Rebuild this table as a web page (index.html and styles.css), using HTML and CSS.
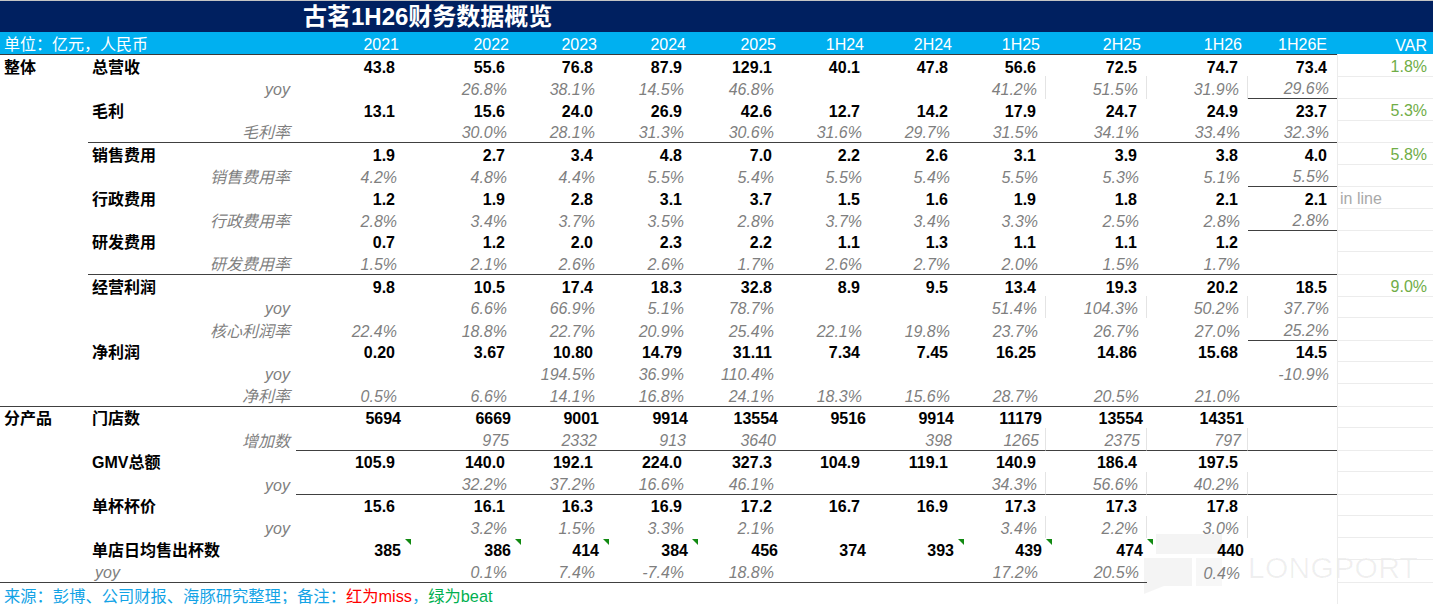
FILE: index.html
```html
<!DOCTYPE html>
<html lang="zh-CN">
<head>
<meta charset="utf-8">
<title>古茗1H26财务数据概览</title>
<link rel="stylesheet" href="styles.css">
</head>
<body>
<div class="sheet">
  <div class="title">古茗1H26财务数据概览</div>

  <div class="r hd">
    <div>单位：亿元，人民币</div><div></div>
    <div>2021</div><div>2022</div><div>2023</div><div>2024</div><div>2025</div><div>1H24</div><div>2H24</div><div>1H25</div><div>2H25</div><div>1H26</div><div>1H26E</div><div>VAR</div>
  </div>

  <div class="r nr">
    <div>整体</div><div>总营收</div>
    <div>43.8</div><div>55.6</div><div>76.8</div><div>87.9</div><div>129.1</div><div>40.1</div><div>47.8</div><div>56.6</div><div>72.5</div><div>74.7</div><div>73.4</div><div>1.8%</div>
  </div>
  <div class="r pr be gl">
    <div></div><div>yoy</div>
    <div></div><div>26.8%</div><div>38.1%</div><div>14.5%</div><div>46.8%</div><div></div><div></div><div>41.2%</div><div>51.5%</div><div>31.9%</div><div>29.6%</div><div></div>
  </div>
  <div class="r nr">
    <div></div><div>毛利</div>
    <div>13.1</div><div>15.6</div><div>24.0</div><div>26.9</div><div>42.6</div><div>12.7</div><div>14.2</div><div>17.9</div><div>24.7</div><div>24.9</div><div>23.7</div><div>5.3%</div>
  </div>
  <div class="r pr b1">
    <div></div><div>毛利率</div>
    <div></div><div>30.0%</div><div>28.1%</div><div>31.3%</div><div>30.6%</div><div>31.6%</div><div>29.7%</div><div>31.5%</div><div>34.1%</div><div>33.4%</div><div>32.3%</div><div></div>
  </div>

  <div class="r nr">
    <div></div><div>销售费用</div>
    <div>1.9</div><div>2.7</div><div>3.4</div><div>4.8</div><div>7.0</div><div>2.2</div><div>2.6</div><div>3.1</div><div>3.9</div><div>3.8</div><div>4.0</div><div>5.8%</div>
  </div>
  <div class="r pr be">
    <div></div><div>销售费用率</div>
    <div>4.2%</div><div>4.8%</div><div>4.4%</div><div>5.5%</div><div>5.4%</div><div>5.5%</div><div>5.4%</div><div>5.5%</div><div>5.3%</div><div>5.1%</div><div>5.5%</div><div></div>
  </div>
  <div class="r nr">
    <div></div><div>行政费用</div>
    <div>1.2</div><div>1.9</div><div>2.8</div><div>3.1</div><div>3.7</div><div>1.5</div><div>1.6</div><div>1.9</div><div>1.8</div><div>2.1</div><div>2.1</div><div class="inline">in line</div>
  </div>
  <div class="r pr be">
    <div></div><div>行政费用率</div>
    <div>2.8%</div><div>3.4%</div><div>3.7%</div><div>3.5%</div><div>2.8%</div><div>3.7%</div><div>3.4%</div><div>3.3%</div><div>2.5%</div><div>2.8%</div><div>2.8%</div><div></div>
  </div>
  <div class="r nr">
    <div></div><div>研发费用</div>
    <div>0.7</div><div>1.2</div><div>2.0</div><div>2.3</div><div>2.2</div><div>1.1</div><div>1.3</div><div>1.1</div><div>1.1</div><div>1.2</div><div></div><div></div>
  </div>
  <div class="r pr b1">
    <div></div><div>研发费用率</div>
    <div>1.5%</div><div>2.1%</div><div>2.6%</div><div>2.6%</div><div>1.7%</div><div>2.6%</div><div>2.7%</div><div>2.0%</div><div>1.5%</div><div>1.7%</div><div></div><div></div>
  </div>

  <div class="r nr">
    <div></div><div>经营利润</div>
    <div>9.8</div><div>10.5</div><div>17.4</div><div>18.3</div><div>32.8</div><div>8.9</div><div>9.5</div><div>13.4</div><div>19.3</div><div>20.2</div><div>18.5</div><div>9.0%</div>
  </div>
  <div class="r pr gl">
    <div></div><div>yoy</div>
    <div></div><div>6.6%</div><div>66.9%</div><div>5.1%</div><div>78.7%</div><div></div><div></div><div>51.4%</div><div>104.3%</div><div>50.2%</div><div>37.7%</div><div></div>
  </div>
  <div class="r pr be">
    <div></div><div>核心利润率</div>
    <div>22.4%</div><div>18.8%</div><div>22.7%</div><div>20.9%</div><div>25.4%</div><div>22.1%</div><div>19.8%</div><div>23.7%</div><div>26.7%</div><div>27.0%</div><div>25.2%</div><div></div>
  </div>
  <div class="r nr">
    <div></div><div>净利润</div>
    <div>0.20</div><div>3.67</div><div>10.80</div><div>14.79</div><div>31.11</div><div>7.34</div><div>7.45</div><div>16.25</div><div>14.86</div><div>15.68</div><div>14.5</div><div></div>
  </div>
  <div class="r pr">
    <div></div><div>yoy</div>
    <div></div><div></div><div>194.5%</div><div>36.9%</div><div>110.4%</div><div></div><div></div><div></div><div></div><div></div><div>-10.9%</div><div></div>
  </div>
  <div class="r pr b0">
    <div></div><div>净利率</div>
    <div>0.5%</div><div>6.6%</div><div>14.1%</div><div>16.8%</div><div>24.1%</div><div>18.3%</div><div>15.6%</div><div>28.7%</div><div>20.5%</div><div>21.0%</div><div></div><div></div>
  </div>

  <div class="r nr ir">
    <div>分产品</div><div>门店数</div>
    <div>5694</div><div>6669</div><div>9001</div><div>9914</div><div>13554</div><div>9516</div><div>9914</div><div>11179</div><div>13554</div><div>14351</div><div></div><div></div>
  </div>
  <div class="r pr ip b2 gl">
    <div></div><div>增加数</div>
    <div></div><div>975</div><div>2332</div><div>913</div><div>3640</div><div></div><div>398</div><div>1265</div><div>2375</div><div>797</div><div></div><div></div>
  </div>
  <div class="r nr">
    <div></div><div>GMV总额</div>
    <div>105.9</div><div>140.0</div><div>192.1</div><div>224.0</div><div>327.3</div><div>104.9</div><div>119.1</div><div>140.9</div><div>186.4</div><div>197.5</div><div></div><div></div>
  </div>
  <div class="r pr b2 gl">
    <div></div><div>yoy</div>
    <div></div><div>32.2%</div><div>37.2%</div><div>16.6%</div><div>46.1%</div><div></div><div></div><div>34.3%</div><div>56.6%</div><div>40.2%</div><div></div><div></div>
  </div>
  <div class="r nr">
    <div></div><div>单杯杯价</div>
    <div>15.6</div><div>16.1</div><div>16.3</div><div>16.9</div><div>17.2</div><div>16.7</div><div>16.9</div><div>17.3</div><div>17.3</div><div>17.8</div><div></div><div></div>
  </div>
  <div class="r pr gl">
    <div></div><div>yoy</div>
    <div></div><div>3.2%</div><div>1.5%</div><div>3.3%</div><div>2.1%</div><div></div><div></div><div>3.4%</div><div>2.2%</div><div>3.0%</div><div></div><div></div>
  </div>
  <div class="r nr ir">
    <div></div><div>单店日均售出杯数</div>
    <div class="tri">385</div><div class="tri">386</div><div class="tri">414</div><div class="tri">384</div><div>456</div><div>374</div><div class="tri">393</div><div class="tri">439</div><div class="tri">474</div><div>440</div><div></div><div></div>
  </div>
  <div class="r pr yl bf">
    <div></div><div>yoy</div>
    <div></div><div>0.1%</div><div>7.4%</div><div>-7.4%</div><div>18.8%</div><div></div><div></div><div>17.2%</div><div>20.5%</div><div>0.4%</div><div></div><div></div>
  </div>

  <div class="ft">
    <div class="src">来源：彭博、公司财报、海豚研究整理；备注：<span class="miss">红为miss</span>，<span class="beat">绿为beat</span></div>
    <div></div><div></div><div class="var"></div>
  </div>

  <div class="wm" aria-hidden="true">
    <svg class="wm-logo" width="100" height="64" viewBox="0 0 100 64">
      <rect x="14" y="4" width="66" height="20" fill="#000" fill-opacity="0.045"/>
      <rect x="2" y="28" width="48" height="28" fill="#000" fill-opacity="0.045"/>
      <rect x="54" y="28" width="26" height="28" fill="#000" fill-opacity="0.03"/>
      <polygon points="2,56 22,56 2,64" fill="#000" fill-opacity="0.045"/>
    </svg>
    <span class="wm-text">LONGPORT</span>
  </div>
</div>
</body>
</html>
```

FILE: styles.css
```css
* { box-sizing: border-box; }

body {
  margin: 0;
  background: #ffffff;
  font-family: "Liberation Sans", "Noto Sans CJK SC", sans-serif;
  font-size: 16px;
  color: #000000;
}

.sheet {
  position: relative;
  width: 1433px;
  overflow: hidden;
}

.title {
  height: 32px;
  background: #002060;
  border-top: 1px solid #c4c4c4;
  color: #ffffff;
  font-size: 24px;
  font-weight: 700;
  line-height: 30px;
  padding-top: 1px;
  padding-left: 303px;
  white-space: nowrap;
}

.r,
.ft {
  display: grid;
  grid-template-columns: 88px 208px 109px 110px 88px 89px 90px 88px 88px 88px 101px 101px 89px 96px;
  height: 22px;
}

.r > div {
  display: flex;
  align-items: center;
  justify-content: flex-end;
  white-space: nowrap;
  min-width: 0;
  line-height: 18px;
  padding-top: 4px;
}

/* header row */
.hd { background: #00b0f0; color: #ffffff; }
.hd > div { padding-right: 6px; }
.hd > div:nth-child(1) { justify-content: flex-start; padding-left: 4px; }
.hd > div:nth-child(-n+13) { border-bottom: 1px solid #3a3a3a; }
.hd > div:nth-child(13) { padding-right: 10px; }

/* category column */
.r > div:nth-child(1) { justify-content: flex-start; padding-left: 4px; font-weight: 700; }
.hd > div:nth-child(1) { font-weight: 400; }

/* number rows */
.nr > div:nth-child(2) { justify-content: flex-start; padding-left: 4px; font-weight: 700; }
.nr > div:nth-child(n+3):nth-child(-n+13) { font-weight: 700; padding-right: 10px; }
.ir > div:nth-child(n+3):nth-child(-n+13) { padding-right: 4px; }

/* percent rows */
.pr > div:nth-child(2) { padding-right: 6px; font-style: italic; color: #7f7f7f; }
.pr > div:nth-child(n+3):nth-child(-n+13) { font-style: italic; color: #7f7f7f; padding-right: 8px; }
.ip > div:nth-child(n+3):nth-child(-n+13) { padding-right: 6px; }
.yl > div:nth-child(2) { justify-content: flex-start; padding-left: 7px; }

/* VAR column */
.r > div:nth-child(14) {
  font-weight: 400;
  font-style: normal;
  color: #70ad47;
  padding-right: 6px;
  border-left: 1px solid #ececec;
  border-bottom: 1px solid #ececec;
}
.hd > div:nth-child(14) { color: #ffffff; border-left: 0; border-bottom: 0; }
.r > div.inline { justify-content: flex-start; padding-left: 2px; color: #a9a9a9; }

/* rules */
.b0 > div:nth-child(-n+13) { border-bottom: 1px solid #404040; }
.b1 > div:nth-child(n+2):nth-child(-n+13) { border-bottom: 1px solid #404040; }
.b2 > div:nth-child(n+3):nth-child(-n+13) { border-bottom: 1px solid #404040; }
.be > div:nth-child(13) { border-bottom: 1px solid #404040; }
.bf > div:nth-child(-n+11) { border-bottom: 1px solid #404040; }
.gl > div:nth-child(n+10):nth-child(-n+12) { border-right: 1px solid #e4e4e4; }

/* comment indicators */
.tri { position: relative; }
.tri::after {
  content: "";
  position: absolute;
  top: 1px;
  right: -6px;
  border-style: solid;
  border-width: 0 6px 6px 0;
  border-color: transparent #128a12 transparent transparent;
}

/* footer */
.ft > .src {
  grid-column: 1 / span 11;
  display: flex;
  align-items: center;
  padding-left: 4px;
  padding-top: 1px;
  white-space: nowrap;
  color: #13a3e6;
  font-size: 16.3px;
  border-bottom: 1px solid #404040;
}
.ft .miss { color: #ff0000; }
.ft .beat { color: #00b050; }
.ft > .var { border-left: 1px solid #ececec; border-bottom: 1px solid #ececec; }

/* watermark */
.wm {
  position: absolute;
  left: 1142px;
  top: 530px;
  display: flex;
  align-items: flex-end;
  gap: 6px;
  pointer-events: none;
  z-index: -1;
}
.wm-logo { display: block; }
.wm-text {
  font-family: "Liberation Sans", sans-serif;
  font-size: 30px;
  color: rgba(0, 0, 0, 0.06);
  letter-spacing: 0.3px;
  line-height: 34px;
  margin-bottom: 9px;
}
```
